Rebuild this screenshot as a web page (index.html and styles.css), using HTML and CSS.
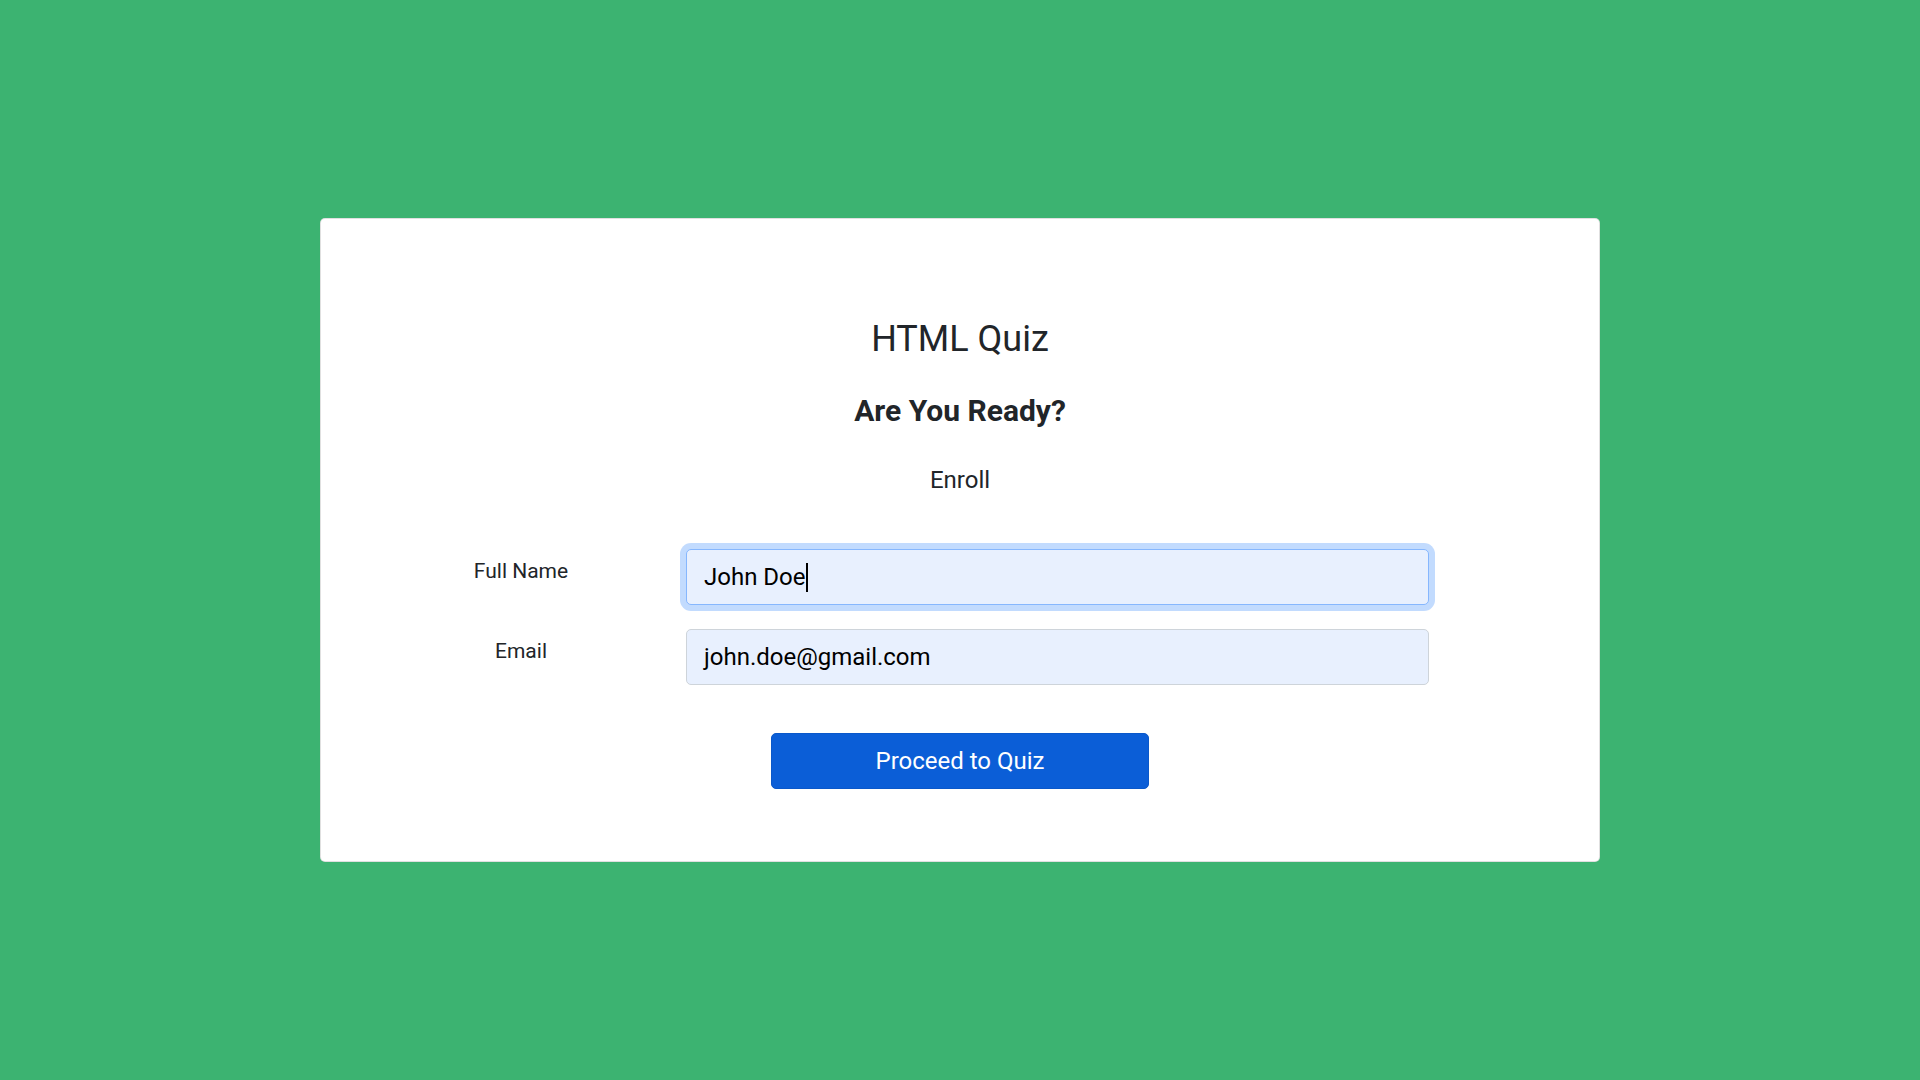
FILE: index.html
```html
<!DOCTYPE html>
<html lang="en">
<head>
<meta charset="utf-8">
<title>HTML Quiz</title>
<link rel="stylesheet" href="styles.css">
</head>
<body>
<main class="page">
  <section class="card">
    <h1 class="title">HTML Quiz</h1>
    <h2 class="subtitle">Are You Ready?</h2>
    <p class="enroll">Enroll</p>
    <form class="form">
      <label class="label" for="name">Full Name</label>
      <div class="field field-focus" id="name"><span class="value">John Doe</span><span class="caret"></span></div>
      <label class="label" for="email">Email</label>
      <div class="field" id="email"><span class="value">john.doe@gmail.com</span></div>
    </form>
    <div class="actions">
      <button class="btn" type="button">Proceed to Quiz</button>
    </div>
  </section>
</main>
</body>
</html>
```
FILE: styles.css
```css
html, body {
  margin: 0;
  padding: 0;
}
body {
  background: #3cb371;
  font-family: Roboto, "Liberation Sans", Arial, sans-serif;
  color: #212529;
}
.page {
  min-height: 100vh;
  display: flex;
  align-items: center;
  justify-content: center;
}
.card {
  box-sizing: border-box;
  width: 1280px;
  background: #fff;
  border: 1px solid rgba(0, 0, 0, 0.12);
  border-radius: 5px;
  padding: 99px 0 72px;
  display: flex;
  flex-direction: column;
}
.title {
  margin: 0 0 31px;
  font-size: 36px;
  font-weight: 400;
  line-height: 1.2;
  text-align: center;
}
.subtitle {
  margin: 0 0 33px;
  font-size: 30px;
  font-weight: 700;
  line-height: 1.2;
  text-align: center;
}
.enroll {
  margin: 0 0 51px;
  font-size: 24px;
  line-height: 1.5;
  text-align: center;
}
.form {
  margin: 0 0 0 75px;
  display: grid;
  grid-template-columns: 250px 743px;
  column-gap: 40px;
  row-gap: 24px;
}
.label {
  padding-top: 7px;
  font-size: 21px;
  line-height: 1.5;
  text-align: center;
}
.field {
  box-sizing: border-box;
  height: 56px;
  padding: 9px 17px;
  font-size: 24px;
  line-height: 36px;
  color: #000;
  background: #e8f0fe;
  border: 1px solid #ced4da;
  border-radius: 5px;
  display: flex;
  align-items: center;
}
.field-focus {
  border-color: #86b7fe;
  box-shadow: 0 0 0 6px rgba(13, 110, 253, 0.25);
}
.caret {
  display: inline-block;
  width: 2px;
  height: 29px;
  margin-top: 2px;
  background: #000;
}
.actions {
  margin-top: 48px;
  display: flex;
  justify-content: center;
}
.btn {
  box-sizing: border-box;
  width: 378px;
  height: 56px;
  padding: 9px 18px;
  font-family: Roboto, "Liberation Sans", Arial, sans-serif;
  font-size: 24px;
  line-height: 36px;
  color: #fff;
  background: #0b5ed7;
  border: 1px solid #0a58ca;
  border-radius: 5px;
}
```
